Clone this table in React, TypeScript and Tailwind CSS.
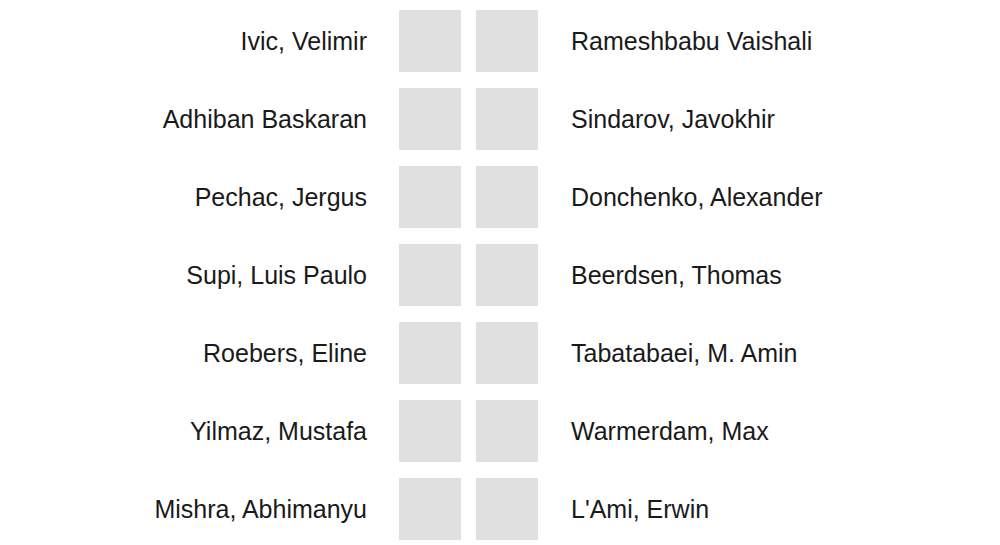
import React from "react";

const pairings: [string, string][] = [
  ["Ivic, Velimir", "Rameshbabu Vaishali"],
  ["Adhiban Baskaran", "Sindarov, Javokhir"],
  ["Pechac, Jergus", "Donchenko, Alexander"],
  ["Supi, Luis Paulo", "Beerdsen, Thomas"],
  ["Roebers, Eline", "Tabatabaei, M. Amin"],
  ["Yilmaz, Mustafa", "Warmerdam, Max"],
  ["Mishra, Abhimanyu", "L'Ami, Erwin"],
];

export default function App() {
  return (
    <div className="min-h-screen bg-white pt-[10px] font-['Liberation_Sans',Arial,sans-serif] text-[25px] text-[#1a1a1a]">
      <div className="flex flex-col gap-[16px]">
        {pairings.map(([white, black]) => (
          <div key={white} className="flex items-center">
            <div className="w-[367px] text-right leading-none whitespace-nowrap">{white}</div>
            <div className="ml-[32px] flex gap-[15px]">
              <div className="w-[62px] h-[62px] bg-[#e0e0e0]" />
              <div className="w-[62px] h-[62px] bg-[#e0e0e0]" />
            </div>
            <div className="ml-[33px] leading-none whitespace-nowrap">{black}</div>
          </div>
        ))}
      </div>
    </div>
  );
}
